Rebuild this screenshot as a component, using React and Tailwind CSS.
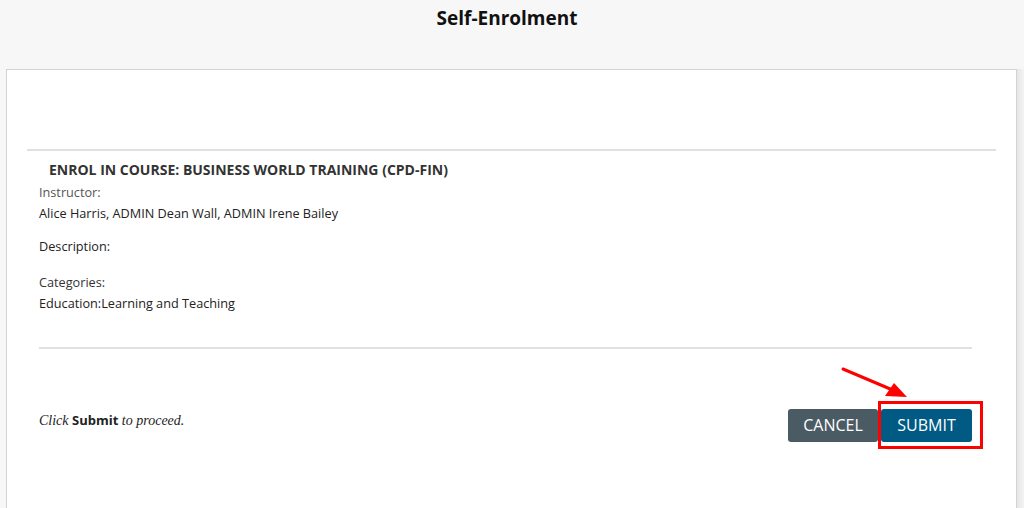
import React from "react";

export default function App() {
  return (
    <div className="w-[1024px] h-[508px] overflow-hidden bg-[#f7f7f7] flex flex-col" style={{ fontFamily: '"Open Sans", sans-serif' }}>
      <div className="h-[69px] flex justify-center pt-[5px] pr-[10px]">
        <h1 className="text-[19px] leading-[26px] font-bold text-[#111]">Self-Enrolment</h1>
      </div>
      <div className="flex flex-1">
        <div className="ml-[6px] w-[1011px] bg-white border border-[#d3d3d3] border-b-0 flex flex-col px-[20px] relative">
          <div className="h-[79px]" />
          <div className="h-[2px] bg-[#e0e0e0]" />
          <div className="pl-[12px] pr-[24px] flex flex-col">
            <div className="pl-[10px] pt-[10px] text-[14px] leading-[18px] font-bold text-[#333]">ENROL IN COURSE: BUSINESS WORLD TRAINING (CPD-FIN)</div>
            <div className="mt-[3px] text-[12.7px] leading-[21px] text-[#555]">Instructor:</div>
            <div className="text-[12.7px] leading-[21px] text-[#222]">Alice Harris, ADMIN Dean Wall, ADMIN Irene Bailey</div>
            <div className="mt-[12px] text-[12.7px] leading-[21px] text-[#222]">Description:</div>
            <div className="mt-[15px] text-[12.7px] leading-[21px] text-[#333]">Categories:</div>
            <div className="text-[12.7px] leading-[21px] text-[#222]">Education:Learning and Teaching</div>
            <div className="mt-[33px] h-[2px] bg-[#e0e0e0]" />
            <div className="mt-[60px] flex items-start justify-between">
              <div className="mt-[1px] text-[14px] leading-[20px] text-[#222] italic" style={{ fontFamily: '"Liberation Serif", serif' }}>
                Click <span className="not-italic font-bold text-[13px]" style={{ fontFamily: '"Open Sans", sans-serif' }}>Submit</span> to proceed.
              </div>
              <div className="flex gap-[3px] relative">
                <button className="w-[90px] h-[33px] rounded-[3px] bg-[#4b5b63] text-white text-[16px] leading-[33px]">CANCEL</button>
                <button className="w-[91px] h-[33px] rounded-[3px] bg-[#005a84] text-white text-[16px] leading-[33px]">SUBMIT</button>
                <div className="absolute left-[90px] top-[-8px] w-[105px] h-[48px] border-[3px] border-[#f00]" />
                <svg className="absolute left-[53px] top-[-42px]" width="70" height="35" viewBox="0 0 70 35">
                  <line x1="2" y1="2" x2="54" y2="24" stroke="#f00" strokeWidth="3" strokeLinecap="round" />
                  <polygon points="66,30 44,29 53,16" fill="#f00" />
                </svg>
              </div>
            </div>
          </div>
        </div>
        <div className="flex-1 bg-gradient-to-r from-[#e6e6e6] to-[#f4f4f4]" />
      </div>
    </div>
  );
}
